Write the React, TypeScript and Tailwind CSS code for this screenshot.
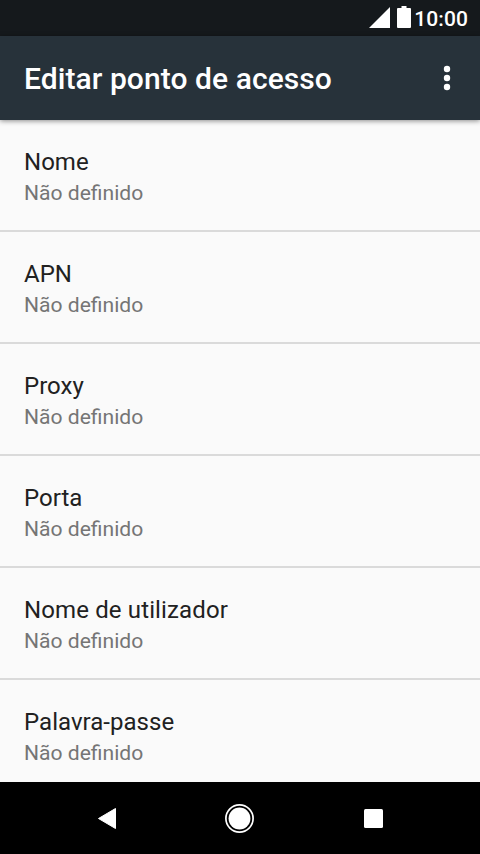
const items = ['Nome', 'APN', 'Proxy', 'Porta', 'Nome de utilizador', 'Palavra-passe'];

function StatusBar() {
  return (
    <div className="flex h-9 shrink-0 items-start justify-end bg-[#15191c] pt-1.5 pr-3 text-white">
      <svg width="21" height="22" viewBox="0 0 21 22" fill="currentColor" className="mr-[7px]">
        <path d="M21 1v21H0z" />
      </svg>
      <svg width="14" height="22" viewBox="0 0 14 22" fill="currentColor" className="mr-[3px]">
        <path d="M4.500 0h5v2H13q1 0 1 1v18q0 1-1 1H1q-1 0-1-1V3q0-1 1-1h3.500z" />
      </svg>
      <span className="pt-0.5 text-[21px] leading-[22px] font-medium tracking-[0.1px]">10:00</span>
    </div>
  );
}

function AppBar() {
  return (
    <header className="z-10 flex h-[84px] shrink-0 items-center justify-between bg-[#27323a] pr-[29px] pl-6 text-white shadow-[0_1px_5px_rgba(0,0,0,0.45)]">
      <h1 className="pt-0.5 text-[30px] leading-none font-medium tracking-[0.07px]">Editar ponto de acesso</h1>
      <svg width="8" height="26" viewBox="0 0 8 26" fill="currentColor">
        <circle cx="4" cy="4" r="3.200" />
        <circle cx="4" cy="13" r="3.200" />
        <circle cx="4" cy="22" r="3.200" />
      </svg>
    </header>
  );
}

function NavBar() {
  return (
    <nav className="flex h-[72px] shrink-0 items-center justify-center bg-black text-white">
      <svg width="288" height="30" viewBox="0 0 288 30" fill="currentColor">
        <path
          d="M19.500 5.500v20L2.500 15.500z"
          stroke="currentColor"
          strokeWidth="1"
          strokeLinejoin="round"
        />
        <circle cx="143.500" cy="15.500" r="13.600" fill="none" stroke="currentColor" strokeWidth="1.700" />
        <circle cx="143.500" cy="15.500" r="10.900" />
        <rect x="268" y="6" width="19" height="19" rx="1.500" />
      </svg>
    </nav>
  );
}

export default function App() {
  return (
    <div className="flex h-[854px] w-[480px] flex-col overflow-hidden bg-[#fafafa] font-[Roboto,sans-serif]">
      <StatusBar />
      <AppBar />
      <ul className="min-h-0 flex-1 overflow-hidden">
        {items.map((item) => (
          <li key={item} className="h-28 border-b-2 border-[#dadada] px-6 pt-[26px]">
            <div className={`text-2xl leading-8 text-[#212121] ${item.length > 15 ? 'tracking-[0.13px]' : 'tracking-[0.03px]'}`}>
              {item}
            </div>
            <div className="text-[21.100px] leading-[30px] text-[#757575]">Não definido</div>
          </li>
        ))}
      </ul>
      <NavBar />
    </div>
  );
}
